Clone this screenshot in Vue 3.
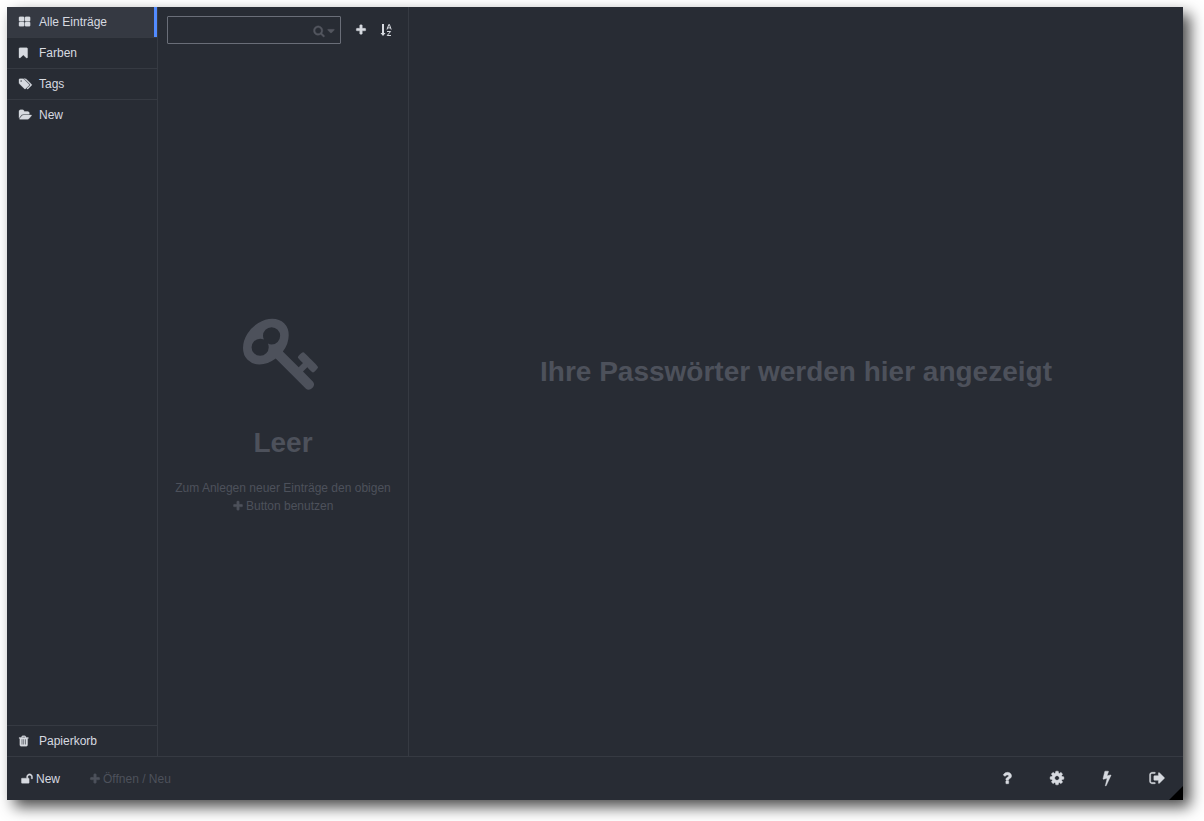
<script setup>
import { ref } from 'vue'

const paths = {
  grid: 'M832 1024v384q0 52-38 90t-90 38h-512q-52 0-90-38t-38-90v-384q0-52 38-90t90-38h512q52 0 90 38t38 90zm0-768v384q0 52-38 90t-90 38h-512q-52 0-90-38t-38-90v-384q0-52 38-90t90-38h512q52 0 90 38t38 90zm896 768v384q0 52-38 90t-90 38h-512q-52 0-90-38t-38-90v-384q0-52 38-90t90-38h512q52 0 90 38t38 90zm0-768v384q0 52-38 90t-90 38h-512q-52 0-90-38t-38-90v-384q0-52 38-90t90-38h512q52 0 90 38t38 90z',
  bookmark: 'M1420 128q23 0 44 9 33 13 52.500 41t19.500 62v1289q0 34-19.500 62t-52.500 41q-19 8-44 8-48 0-83-32l-441-424-441 424q-36 33-83 33-23 0-44-9-33-13-52.500-41t-19.500-62v-1289q0-34 19.500-62t52.500-41q21-9 44-9h1048z',
  tags: 'M448 448q0-53-37.500-90.500t-90.500-37.500-90.500 37.500-37.500 90.500 37.500 90.500 90.500 37.500 90.500-37.500 37.500-90.500zm1067 576q0 53-37 90l-491 492q-39 37-91 37-53 0-90-37l-715-716q-38-37-64.500-101t-26.500-117v-416q0-52 38-90t90-38h416q53 0 117 26.500t102 64.500l715 714q37 39 37 91zm384 0q0 53-37 90l-491 492q-39 37-91 37-36 0-59-14t-53-45l470-470q37-37 37-90 0-52-37-91l-715-714q-38-38-102-64.500t-117-26.500h224q53 0 117 26.500t102 64.500l715 714q37 39 37 91z',
  folder: 'M1879 952q0 31-31 66l-336 396q-43 51-120.500 86.500t-143.500 35.500h-1088q-34 0-60.500-13t-26.500-43q0-31 31-66l336-396q43-51 120.500-86.500t143.500-35.500h1088q34 0 60.500 13t26.500 43zm-343-344v160h-832q-94 0-197 47.500t-164 119.500l-337 396-5 6q0-4-.5-12.500t-.5-12.500v-960q0-92 66-158t158-66h320q92 0 158 66t66 158v32h544q92 0 158 66t66 158z',
  trash: 'M704 1376v-704q0-14-9-23t-23-9h-64q-14 0-23 9t-9 23v704q0 14 9 23t23 9h64q14 0 23-9t9-23zm256 0v-704q0-14-9-23t-23-9h-64q-14 0-23 9t-9 23v704q0 14 9 23t23 9h64q14 0 23-9t9-23zm256 0v-704q0-14-9-23t-23-9h-64q-14 0-23 9t-9 23v704q0 14 9 23t23 9h64q14 0 23-9t9-23zm-544-992h448l-48-117q-7-9-17-11h-317q-10 2-17 11zm928 32v64q0 14-9 23t-23 9h-96v948q0 83-47 143.500t-113 60.500h-832q-66 0-113-58.500t-47-141.500v-952h-96q-14 0-23-9t-9-23v-64q0-14 9-23t23-9h309l70-167q15-37 54-63t79-26h320q40 0 79 26t54 63l70 167h309q14 0 23 9t9 23z',
  plus: 'M1600 736v192q0 40-28 68t-68 28h-416v416q0 40-28 68t-68 28h-192q-40 0-68-28t-28-68v-416h-416q-40 0-68-28t-28-68v-192q0-40 28-68t68-28h416v-416q0-40 28-68t68-28h192q40 0 68 28t28 68v416h416q40 0 68 28t28 68z',
  search: 'M1216 832q0-185-131.500-316.500t-316.500-131.500-316.500 131.500-131.500 316.500 131.500 316.500 316.500 131.500 316.500-131.500 131.500-316.500zm512 832q0 52-38 90t-90 38q-54 0-90-38l-343-342q-179 124-399 124-143 0-273.500-55.500t-225-150-150-225-55.500-273.500 55.500-273.500 150-225 225-150 273.500-55.500 273.500 55.500 225 150 150 225 55.500 273.500q0 220-124 399l343 343q37 37 37 90z',
  caret: 'M1408 704q0 26-19 45l-448 448q-19 19-45 19t-45-19l-448-448q-19-19-19-45t19-45 45-19h896q26 0 45 19t19 45z',
  key: 'M832 512q0-80-56-136t-136-56-136 56-56 136q0 42 19 83-41-19-83-19-80 0-136 56t-56 136 56 136 136 56 136-56 56-136q0-42-19-83 41 19 83 19 80 0 136-56t56-136zm851 704q0 17-49 66t-66 49q-9 0-28.500-16t-36.500-33-38.500-40-24.500-26l-96 96 220 220q28 28 28 68 0 42-39 81t-81 39q-40 0-68-28l-671-671q-176 131-365 131-163 0-265.500-102.500t-102.500-265.500q0-160 95-313t248-248 313-95q163 0 265.500 102.500t102.500 265.500q0 189-131 365l355 355 96-96q-3-3-26-24.500t-40-38.500-33-36.500-16-28.500q0-17 49-66t66-49q13 0 23 10 6 6 46 44.500t82 79.500 86.500 86 73 78 28.500 41z',
  unlock: 'M1728 576v256q0 26-19 45t-45 19h-64q-26 0-45-19t-19-45v-256q0-106-75-181t-181-75-181 75-75 181v192h96q40 0 68 28t28 68v576q0 40-28 68t-68 28h-960q-40 0-68-28t-28-68v-576q0-40 28-68t68-28h672v-192q0-185 131.500-316.500t316.500-131.500 316.500 131.500 131.500 316.500z',
  question: 'M1088 1256v240q0 16-12 28t-28 12h-240q-16 0-28-12t-12-28v-240q0-16 12-28t28-12h240q16 0 28 12t12 28zm316-600q0 54-15.500 101t-35 76.500-55 59.500-57.500 43.500-61 35.500q-41 23-68.500 65t-27.500 67q0 17-12 32.500t-28 15.500h-240q-15 0-25.500-18.500t-10.500-37.500v-45q0-83 65-156.500t143-108.500q59-27 84-56t25-76q0-42-46.500-74t-107.500-32q-65 0-108 29-35 25-107 115-13 16-31 16-12 0-25-8l-164-125q-13-10-15.500-25t5.500-28q160-266 464-266 80 0 161 31t146 83 106 127.500 41 158.500z',
  cog: 'M1152 896q0-106-75-181t-181-75-181 75-75 181 75 181 181 75 181-75 75-181zm512-109v222q0 12-8 23t-20 13l-185 28q-19 54-39 91 35 50 107 138 10 12 10 25t-9 23q-27 37-99 108t-94 71q-12 0-26-9l-138-108q-44 23-91 38-16 136-29 186-7 28-36 28h-222q-14 0-24.500-8.500t-11.500-21.500l-28-184q-49-16-90-37l-141 107q-10 9-25 9-14 0-25-11-126-114-165-168-7-10-7-23 0-12 8-23 15-21 51-66.500t54-70.500q-27-50-41-99l-183-27q-13-2-21-12.500t-8-23.500v-222q0-12 8-23t19-13l186-28q14-46 39-92-40-57-107-138-10-12-10-24 0-10 9-23 26-36 98.500-107.500t94.500-71.500q13 0 26 10l138 107q44-23 91-38 16-136 29-186 7-28 36-28h222q14 0 24.500 8.500t11.500 21.500l28 184q49 16 90 37l142-107q9-9 24-9 13 0 25 10 129 119 165 170 7 8 7 22 0 12-8 23-15 21-51 66.500t-54 70.500q26 50 41 98l183 28q13 2 21 12.500t8 23.500z',
  bolt: 'M1333 566q18 20 7 44l-540 1157q-13 25-42 25-4 0-14-2-17-5-25.500-19t-4.500-30l197-808-406 101q-4 1-12 1-18 0-31-11-18-15-13-39l201-825q4-14 16-23t28-9h328q19 0 32 12.500t13 29.500q0 8-5 18l-171 463 396-98q8-2 12-2 19 0 34 15z',
  signout: 'M704 1440q0 4 1 20t.5 26.500-3 23.500-10 19.500-20.500 6.500h-320q-119 0-203.500-84.500t-84.500-203.500v-704q0-119 84.500-203.500t203.500-84.500h320q13 0 22.500 9.500t9.500 22.500q0 4 1 20t.5 26.500-3 23.500-10 19.500-20.500 6.500h-320q-66 0-113 47t-47 113v704q0 66 47 113t113 47h312l11.500 1 11.500 3 8 5.500 7 9 2 13.500zm1024-544q0 26-19 45l-544 544q-19 19-45 19t-45-19-19-45v-288h-448q-26 0-45-19t-19-45v-384q0-26 19-45t45-19h448v-288q0-26 19-45t45-19 45 19l544 544q19 19 19 45z'
}

const menu = [
  { id: 'all', label: 'Alle Einträge', icon: 'grid', box: '64 0 1792 1792' },
  { id: 'colors', label: 'Farben', icon: 'bookmark', box: '256 0 1792 1792' },
  { id: 'tags', label: 'Tags', icon: 'tags', box: '0 0 1792 1792' },
  { id: 'new', label: 'New', icon: 'folder', box: '0 0 1792 1792' }
]
const tools = [
  { label: 'Hilfe', icon: 'question' },
  { label: 'Einstellungen', icon: 'cog' },
  { label: 'Generator', icon: 'bolt' },
  { label: 'Sperren', icon: 'signout' }
]
const active = ref('all')
const query = ref('')
</script>

<template>
  <div class="page">
    <div class="app">
      <div class="body">
        <nav class="menu">
          <button
            v-for="item in menu"
            :key="item.id"
            type="button"
            class="menu-item"
            :class="{ active: active === item.id }"
            @click="active = item.id"
          >
            <svg class="icon" :viewBox="item.box" aria-hidden="true"><path :d="paths[item.icon]" /></svg>
            <span>{{ item.label }}</span>
          </button>
          <button type="button" class="menu-item trash" :class="{ active: active === 'trash' }" @click="active = 'trash'">
            <svg class="icon" viewBox="192 0 1792 1792" aria-hidden="true"><path :d="paths.trash" /></svg>
            <span>Papierkorb</span>
          </button>
        </nav>

        <section class="list">
          <div class="list-head">
            <div class="search">
              <input v-model="query" type="text" aria-label="Suche" />
              <button type="button" class="search-opts" aria-label="Suchoptionen">
                <svg class="icon" viewBox="0 0 1792 1792" aria-hidden="true"><path :d="paths.search" /></svg>
                <svg class="icon caret" viewBox="384 0 1024 1792" aria-hidden="true"><path :d="paths.caret" /></svg>
              </button>
            </div>
            <button type="button" class="head-btn" aria-label="Neu">
              <svg class="icon" viewBox="0 0 1792 1792" aria-hidden="true"><path :d="paths.plus" /></svg>
            </button>
            <button type="button" class="head-btn" aria-label="Sortieren">
              <svg class="icon sort" viewBox="0 0 12 14" aria-hidden="true">
                <path d="M2 1h2v9h1.500L3 13 .5 10H2z" />
                <path class="line" d="M7 6.500 8.800 1.500h.6l1.800 5M7.500 4.900h3.200M7 8.500h3.600L7.200 12.500H11" />
              </svg>
            </button>
          </div>
          <div class="empty">
            <svg class="icon key" viewBox="0 0 1792 1792" aria-hidden="true"><path :d="paths.key" /></svg>
            <h1>Leer</h1>
            <p>
              Zum Anlegen neuer Einträge den obigen
              <svg class="icon inline" viewBox="128 0 1536 1792" aria-hidden="true"><path :d="paths.plus" /></svg>
              Button benutzen
            </p>
          </div>
        </section>

        <main class="details">
          <h1>Ihre Passwörter werden hier angezeigt</h1>
        </main>
      </div>

      <footer class="footer">
        <button type="button" class="db">
          <svg class="icon" viewBox="0 0 1792 1792" aria-hidden="true"><path :d="paths.unlock" /></svg>
          <span>New</span>
        </button>
        <button type="button" class="db muted">
          <svg class="icon" viewBox="0 0 1792 1792" aria-hidden="true"><path :d="paths.plus" /></svg>
          <span>Öffnen / Neu</span>
        </button>
        <div class="tools">
          <button v-for="t in tools" :key="t.icon" type="button" class="tool" :aria-label="t.label">
            <svg class="icon" viewBox="0 0 1792 1792" aria-hidden="true"><path :d="paths[t.icon]" /></svg>
          </button>
        </div>
      </footer>
      <span class="grip"></span>
    </div>
  </div>
</template>

<style>
body {
  margin: 0;
  background: #fff;
}
</style>

<style scoped>
* {
  box-sizing: border-box;
}
.page {
  display: flex;
  min-height: 100vh;
  padding: 7px 21px 21px 7px;
  overflow: hidden;
  font: 12px/18px "Liberation Sans", Arial, sans-serif;
  color: #d7dae0;
}
.app {
  position: relative;
  display: flex;
  flex: 1;
  flex-direction: column;
  background: #282c34;
  box-shadow: 7px 7px 14px rgba(0, 0, 0, 0.7);
}
button {
  display: flex;
  align-items: center;
  margin: 0;
  padding: 0;
  border: 0;
  background: none;
  color: inherit;
  font: inherit;
  cursor: pointer;
}
.icon {
  flex: none;
  width: 12px;
  height: 12px;
  fill: currentColor;
  stroke: currentColor;
  stroke-width: 50;
  overflow: visible;
}
.body {
  display: flex;
  flex: 1;
}
.menu {
  display: flex;
  flex-direction: column;
  width: 151px;
  border-right: 1px solid #363a42;
}
.menu-item {
  gap: 8px;
  height: 31px;
  padding-left: 12px;
  border-top: 1px solid #363a42;
}
.menu-item:first-child {
  height: 30px;
  border-top: 0;
}
.menu-item.active {
  background: #353942;
  border-right: 3px solid #528bff;
}
.menu-item.trash {
  margin-top: auto;
}
.list {
  display: flex;
  flex-direction: column;
  width: 251px;
  border-right: 1px solid #363a42;
}
.list-head {
  display: flex;
  align-items: center;
  padding: 9px 10px 0 9px;
}
.search {
  display: flex;
  align-items: center;
  width: 174px;
  height: 28px;
  margin-right: 8px;
  padding: 0 5px 0 4px;
  border: 1px solid #6a6e78;
  border-radius: 1px;
}
.search input {
  flex: 1;
  min-width: 0;
  border: 0;
  outline: 0;
  background: none;
  color: inherit;
  font: inherit;
}
.search-opts {
  gap: 2px;
  padding-top: 1px;
  color: #53565f;
}
.caret {
  width: 8px;
}
.head-btn {
  justify-content: center;
  width: 25px;
  height: 28px;
}
.icon.sort {
  height: 14px;
  stroke-width: 0;
}
.icon .line {
  fill: none;
  stroke-width: 1;
}
.empty {
  display: flex;
  flex: 1;
  flex-direction: column;
  align-items: center;
  justify-content: center;
  padding: 28px 12px 0;
  color: #4d515b;
  text-align: center;
}
h1 {
  margin: 0;
  font-size: 28px;
  line-height: 36px;
  color: #4d515b;
}
.icon.key {
  width: 80px;
  height: 80px;
  margin-bottom: 32px;
  stroke-width: 0;
}
.empty p {
  margin: 18px 0 0;
}
.inline {
  width: 10px;
  vertical-align: -2px;
}
.details {
  display: flex;
  flex: 1;
  align-items: center;
  justify-content: center;
  padding-bottom: 20px;
  text-align: center;
}
.footer {
  display: flex;
  align-items: center;
  height: 44px;
  padding: 0 1px 0 14px;
  border-top: 1px solid #363a42;
}
.db {
  gap: 3px;
  margin-right: 29px;
}
.db.muted {
  gap: 2px;
  color: #4d515b;
}
.tools {
  display: flex;
  margin-left: auto;
}
.tool {
  justify-content: center;
  width: 50px;
  height: 43px;
  padding-bottom: 2px;
}
.tool .icon {
  width: 16px;
  height: 16px;
}
.grip {
  position: absolute;
  right: 0;
  bottom: 0;
  width: 14px;
  height: 14px;
  background: #000;
  clip-path: polygon(100% 0, 100% 100%, 0 100%);
}
</style>
